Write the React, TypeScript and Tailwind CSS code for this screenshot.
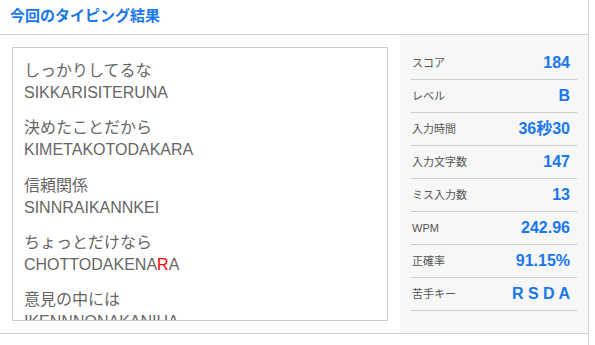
import React from "react";

const groups: { kana: string; roma: React.ReactNode }[] = [
  { kana: "しっかりしてるな", roma: "SIKKARISITERUNA" },
  { kana: "決めたことだから", roma: "KIMETAKOTODAKARA" },
  { kana: "信頼関係", roma: "SINNRAIKANNKEI" },
  {
    kana: "ちょっとだけなら",
    roma: (
      <>
        CHOTTODAKENA<span className="text-[#ff0000]">R</span>A
      </>
    ),
  },
  { kana: "意見の中には", roma: "IKENNNONAKANIHA" },
];

const stats = [
  { label: "スコア", value: "184" },
  { label: "レベル", value: "B" },
  { label: "入力時間", value: "36秒30" },
  { label: "入力文字数", value: "147" },
  { label: "ミス入力数", value: "13" },
  { label: "WPM", value: "242.96" },
  { label: "正確率", value: "91.15%" },
  { label: "苦手キー", value: "R S D A" },
];

export default function App() {
  return (
    <div
      className="w-[595px] h-[345px] bg-white overflow-hidden"
      style={{ fontFamily: '"Liberation Sans", "Noto Sans CJK JP", sans-serif' }}
    >
      <div className="w-[589px] h-[345px] border-r border-[#d0d0d0] flex flex-col">
        <div className="h-[35px] border-b border-[#d0d0d0] flex items-center pl-[10px] pb-[3px]">
          <h1 className="text-[15px] font-bold text-[#1877ee] leading-none">
            今回のタイピング結果
          </h1>
        </div>
        <div className="flex h-[299px] border-b border-[#d0d0d0]">
          <div className="w-[400px] p-3">
            <div className="h-full border border-[#cccccc] overflow-hidden pl-[11px] pt-[12px]">
              {groups.map((g, i) => (
                <div key={i} className="mb-[13.3px] text-[16px] leading-[22px] text-[#666666]">
                  <div>{g.kana}</div>
                  <div>{g.roma}</div>
                </div>
              ))}
            </div>
          </div>
          <div className="w-[188px] bg-[#f7f7f7] px-[11px] pt-[12px]">
            {stats.map((s) => (
              <div
                key={s.label}
                className="h-[33px] border-b border-[#cccccc] flex items-center justify-between pl-[1px] pr-[7px]"
              >
                <span className="text-[11px] text-[#555555]">{s.label}</span>
                <span className="text-[16px] font-bold text-[#1877ee] whitespace-pre">
                  {s.value}
                </span>
              </div>
            ))}
          </div>
        </div>
      </div>
    </div>
  );
}
